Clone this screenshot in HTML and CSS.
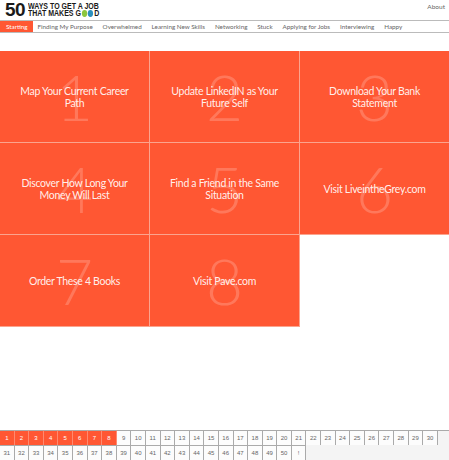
FILE: index.html
```html
<!DOCTYPE html>
<html lang="en">
<head>
  <meta charset="UTF-8" />
  <title>50 Ways to Get a Job That Makes Good</title>
  <link rel="stylesheet" href="styles.css">
</head>
<body>
  <header class="top">
    <a class="logo" href="#">
      <span class="logo-num">50</span>
      <span class="logo-text">WAYS TO GET A JOB<br>THAT MAKES G<svg class="oo" viewBox="0 0 17 7" width="17" height="7"><circle cx="4.5" cy="3.5" r="3.4" fill="#8cc63f"/><circle cx="12" cy="3.5" r="3.4" fill="#2a8fbd"/></svg>D</span>
    </a>
    <a class="about" href="#">About</a>
  </header>

  <nav class="tabs">
    <a class="tab active" href="#">Starting</a>
    <a class="tab" href="#">Finding My Purpose</a>
    <a class="tab" href="#">Overwhelmed</a>
    <a class="tab" href="#">Learning New Skills</a>
    <a class="tab" href="#">Networking</a>
    <a class="tab" href="#">Stuck</a>
    <a class="tab" href="#">Applying for Jobs</a>
    <a class="tab" href="#">Interviewing</a>
    <a class="tab" href="#">Happy</a>
  </nav>

  <main class="grid">
    <a class="card" href="#"><span class="num">1</span><span class="title">Map Your Current Career Path</span></a>
    <a class="card" href="#"><span class="num">2</span><span class="title">Update LinkedIN as Your Future Self</span></a>
    <a class="card" href="#"><span class="num">3</span><span class="title">Download Your Bank Statement</span></a>
    <a class="card" href="#"><span class="num">4</span><span class="title">Discover How Long Your Money Will Last</span></a>
    <a class="card" href="#"><span class="num">5</span><span class="title">Find a Friend in the Same Situation</span></a>
    <a class="card" href="#"><span class="num">6</span><span class="title">Visit LiveintheGrey.com</span></a>
    <a class="card" href="#"><span class="num">7</span><span class="title">Order These 4 Books</span></a>
    <a class="card" href="#"><span class="num">8</span><span class="title">Visit Pave.com</span></a>
  </main>

  <footer class="pager" id="pager"></footer>

  <script>
    const pager = document.getElementById('pager');
    for (let i = 1; i <= 51; i++) {
      const cell = document.createElement('a');
      cell.className = i <= 8 ? 'page on' : 'page';
      cell.textContent = i === 51 ? '!' : i;
      pager.appendChild(cell);
    }
  </script>
</body>
</html>
```

FILE: styles.css
```css
body {
  margin: 0;
  height: 460px;
  overflow: hidden;
  position: relative;
  background: #fff;
  font-family: 'Lato', sans-serif;
  color: #666;
}

a {
  color: inherit;
  text-decoration: none;
}

.top {
  display: flex;
  justify-content: space-between;
  height: 20px;
  padding: 0 4px 0 5px;
}

.logo {
  display: flex;
  align-items: center;
  gap: 3px;
  color: #1a1a1a;
}

.logo-num {
  font-family: 'Liberation Sans', sans-serif;
  font-weight: 700;
  font-size: 19px;
  letter-spacing: -0.5px;
}

.logo-text {
  font-family: 'Liberation Sans', sans-serif;
  font-weight: 700;
  font-size: 9px;
  line-height: 7px;
  white-space: nowrap;
  transform: scaleX(0.78);
  transform-origin: left center;
}

.oo {
  vertical-align: -1px;
}

.about {
  font-size: 6.5px;
  padding-top: 3px;
}

.tabs {
  display: flex;
  height: 11px;
  border-top: 1px solid #bbb;
  border-bottom: 1px solid #bbb;
  font-size: 6.3px;
  line-height: 11px;
  gap: 9.9px;
}

.tab {
  white-space: nowrap;
}

.tab:nth-child(2) {
  margin-left: -5px;
}

.tab.active {
  background: #ff5733;
  color: #fff;
  padding: 0 5px 0 6px;
}

.grid {
  display: grid;
  grid-template-columns: repeat(3, 150px);
  grid-auto-rows: 92px;
  margin-top: 18px;
}

.card {
  box-sizing: border-box;
  position: relative;
  display: flex;
  align-items: center;
  justify-content: center;
  padding: 0 14px;
  background: #ff5733;
  border-right: 1px solid #fba48e;
  border-bottom: 1px solid #fba48e;
  color: rgba(255, 255, 255, 0.92);
  text-align: center;
  font-size: 10.5px;
  letter-spacing: -0.3px;
  line-height: 12px;
  overflow: hidden;
}

.num {
  position: absolute;
  inset: 0;
  display: flex;
  align-items: center;
  justify-content: center;
  font-size: 64px;
  font-weight: 300;
  color: rgba(255, 255, 255, 0.2);
}

.title {
  position: relative;
}

.pager {
  position: absolute;
  left: 0;
  right: 0;
  bottom: 0;
  height: 30px;
  display: grid;
  grid-template-columns: repeat(30, 14.6px);
  grid-auto-rows: 15px;
  background: #f4f4f4;
  box-shadow: inset 0 1px 0 #aaa;
  font-family: 'Liberation Sans', sans-serif;
  font-size: 6px;
  line-height: 14px;
  text-align: center;
  color: #666;
}

.page {
  box-sizing: border-box;
  background: #fcfcfc;
  border-top: 1px solid #aaa;
  border-right: 1px solid #aaa;
}

.page.on {
  background: #ff5733;
  color: #fff;
  border-right-color: #ff8a70;
}
```
